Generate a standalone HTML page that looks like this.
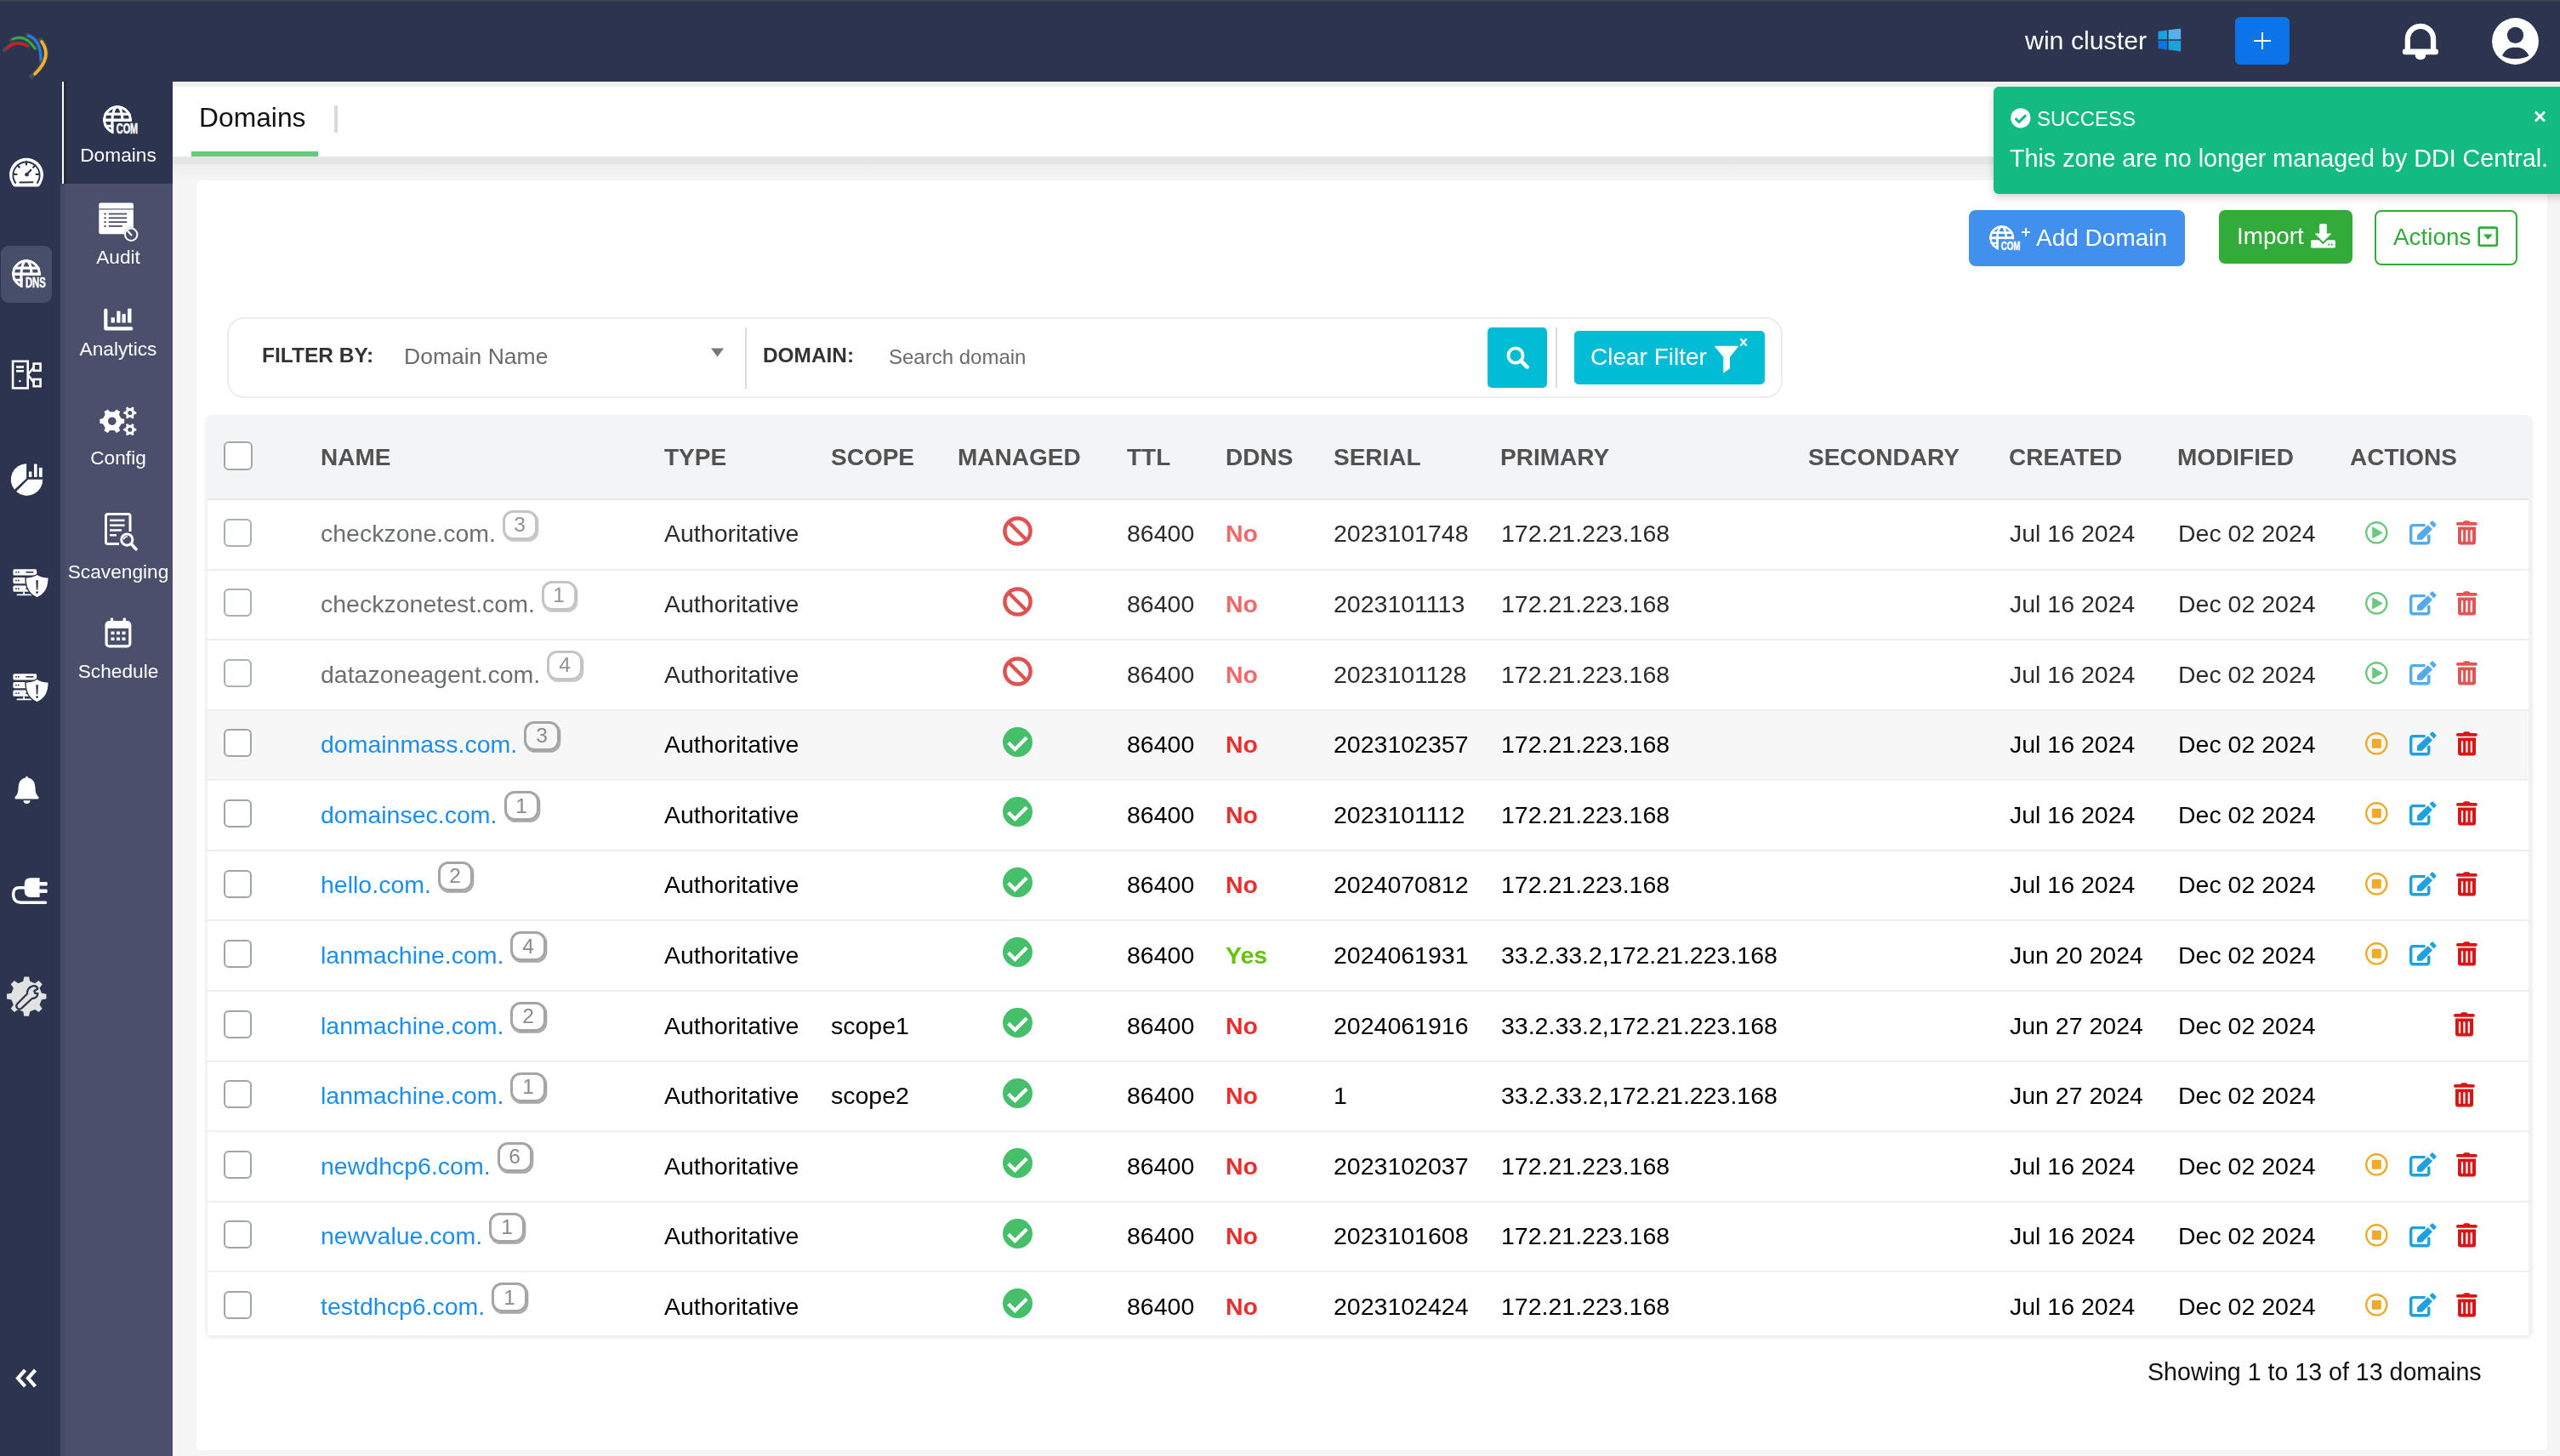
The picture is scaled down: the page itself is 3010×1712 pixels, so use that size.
<!DOCTYPE html>
<html><head><meta charset="utf-8"><style>
html,body{margin:0;padding:0;width:3010px;height:1712px;overflow:hidden;background:#f5f5f5}
body{position:relative;font-family:"Liberation Sans", sans-serif}
.a{position:absolute}
.t{position:absolute;white-space:nowrap;will-change:transform}
svg{overflow:visible}
</style></head><body>
<div class="a" style="left:0.00px;top:0.00px;width:3010.00px;height:1712.00px;background:#f5f5f5"></div>
<div class="a" style="left:0.00px;top:0.00px;width:3010.00px;height:96.00px;background:#2d3450"></div>
<div class="a" style="left:0.00px;top:0.00px;width:3010.00px;height:2.00px;background:#3d4249"></div>
<div class="a" style="left:0.00px;top:96.00px;width:71.00px;height:1616.00px;background:#2d3450"></div>
<div class="a" style="left:71.00px;top:96.00px;width:132.00px;height:1616.00px;background:#4a506b"></div>
<div class="a" style="left:71.00px;top:96.00px;width:6.00px;height:1616.00px;background:#454b66"></div>
<div class="a" style="left:71.00px;top:96.00px;width:132.00px;height:120.00px;background:#2d3450"></div>
<div class="a" style="left:73.00px;top:96.00px;width:2.40px;height:120.00px;background:#ffffff"></div>
<div class="a" style="left:75.40px;top:96.00px;width:2.60px;height:120.00px;background:#292c36"></div>
<div class="a" style="left:203.00px;top:96.00px;width:2807.00px;height:6.00px;background:#f1f1f1"></div>
<div class="a" style="left:203.00px;top:102.00px;width:2807.00px;height:82.00px;background:#ffffff"></div>
<div class="a" style="left:203.00px;top:184.00px;width:2807.00px;height:9.00px;background:#e4e6e5"></div>
<div class="a" style="left:203.00px;top:193.00px;width:2807.00px;height:19.00px;background:linear-gradient(#eeeeee,#f5f5f5)"></div>
<div class="a" style="left:225.00px;top:178.00px;width:149.00px;height:6.00px;background:#68c97d"></div>
<div class="t" style="left:234.30px;top:123.07px;font-size:31.8px;line-height:31.8px;color:#111;font-weight:400;">Domains</div>
<div class="a" style="left:393.00px;top:124.00px;width:4.00px;height:32.00px;background:#d9d9d9"></div>
<div class="a" style="left:231.00px;top:212.00px;width:2764.00px;height:1493.00px;background:#ffffff;border-radius:5px"></div>
<div class="a" style="left:2315.00px;top:247.00px;width:254.00px;height:66.00px;background:#4290ed;border-radius:8px"></div>
<div class="t" style="left:2394.00px;top:266.29px;font-size:28px;line-height:28px;color:#fff;font-weight:400;">Add Domain</div>
<div class="a" style="left:2609.00px;top:247.00px;width:157.00px;height:63.00px;background:#33ab3a;border-radius:7px"></div>
<div class="t" style="left:2630.00px;top:264.46px;font-size:27.8px;line-height:27.8px;color:#fff;font-weight:400;">Import</div>
<div class="a" style="left:2792.00px;top:247.00px;width:168.00px;height:65.00px;border:2px solid #33ab3a;border-radius:8px;box-sizing:border-box"></div>
<div class="t" style="left:2814.00px;top:265.38px;font-size:27.9px;line-height:27.9px;color:#33ab3a;font-weight:400;">Actions</div>
<div class="a" style="left:267.00px;top:373.00px;width:1829.00px;height:95.00px;border:2px solid #ececec;border-radius:20px;box-sizing:border-box"></div>
<div class="t" style="left:308.00px;top:406.26px;font-size:24.5px;line-height:24.5px;color:#333;font-weight:700;">FILTER BY:</div>
<div class="t" style="left:475.00px;top:405.56px;font-size:26.5px;line-height:26.5px;color:#6b6b6b;font-weight:400;">Domain Name</div>
<div class="a" style="left:876.00px;top:385.00px;width:2.00px;height:72.00px;background:#dcdcdc"></div>
<div class="t" style="left:897.00px;top:406.34px;font-size:24.4px;line-height:24.4px;color:#333;font-weight:700;">DOMAIN:</div>
<div class="t" style="left:1045.00px;top:407.68px;font-size:24px;line-height:24px;color:#6b6b6b;font-weight:400;">Search domain</div>
<div class="a" style="left:1749.00px;top:385.00px;width:70.00px;height:71.00px;background:#00bcd4;border-radius:5px"></div>
<div class="a" style="left:1829.00px;top:385.00px;width:2.00px;height:71.00px;background:#dcdcdc"></div>
<div class="a" style="left:1851.00px;top:389.00px;width:224.00px;height:63.00px;background:#00bcd4;border-radius:5px"></div>
<div class="t" style="left:1870.00px;top:406.29px;font-size:28px;line-height:28px;color:#fff;font-weight:400;">Clear Filter</div>
<div class="a" style="left:241.50px;top:488.00px;width:2735.50px;height:1083.00px;background:#f1f1f1;border-radius:8px;box-shadow:0 2px 4px rgba(0,0,0,0.09)"></div>
<div class="a" style="left:241.50px;top:488.00px;width:2735.50px;height:99.00px;background:#f3f4f6;border-radius:8px 8px 0 0"></div>
<div class="a" style="left:244.00px;top:586.00px;width:2729.00px;height:2.00px;background:#e6e6e6"></div>
<div class="a" style="left:263.00px;top:519.00px;width:34.00px;height:34.00px;border:2px solid #a2a7a5;border-radius:6px;box-sizing:border-box;background:#fff"></div>
<div class="t" style="left:377.30px;top:523.79px;font-size:28px;line-height:28px;color:#525252;font-weight:700;">NAME</div>
<div class="t" style="left:781.30px;top:523.79px;font-size:28px;line-height:28px;color:#525252;font-weight:700;">TYPE</div>
<div class="t" style="left:977.30px;top:523.79px;font-size:28px;line-height:28px;color:#525252;font-weight:700;">SCOPE</div>
<div class="t" style="left:1126.30px;top:523.79px;font-size:28px;line-height:28px;color:#525252;font-weight:700;">MANAGED</div>
<div class="t" style="left:1325.30px;top:523.79px;font-size:28px;line-height:28px;color:#525252;font-weight:700;">TTL</div>
<div class="t" style="left:1441.30px;top:523.79px;font-size:28px;line-height:28px;color:#525252;font-weight:700;">DDNS</div>
<div class="t" style="left:1568.30px;top:523.79px;font-size:28px;line-height:28px;color:#525252;font-weight:700;">SERIAL</div>
<div class="t" style="left:1764.30px;top:523.79px;font-size:28px;line-height:28px;color:#525252;font-weight:700;">PRIMARY</div>
<div class="t" style="left:2126.30px;top:523.79px;font-size:28px;line-height:28px;color:#525252;font-weight:700;">SECONDARY</div>
<div class="t" style="left:2362.30px;top:523.79px;font-size:28px;line-height:28px;color:#525252;font-weight:700;">CREATED</div>
<div class="t" style="left:2560.30px;top:523.79px;font-size:28px;line-height:28px;color:#525252;font-weight:700;">MODIFIED</div>
<div class="t" style="left:2763.30px;top:523.79px;font-size:28px;line-height:28px;color:#525252;font-weight:700;">ACTIONS</div>
<div class="a" style="left:244px;top:588px;width:2729px;height:982px;overflow:hidden">
<div class="a" style="left:0;top:0.00px;width:2729px;height:82.58px;background:#fff">
<div class="a" style="left:19px;top:21.7px;width:33px;height:33px;border:2.1px solid #a9b3ae;border-radius:6px;box-sizing:border-box;background:#fff"></div>
<div class="t" style="left:133.20px;top:25.47px;font-size:28.5px;line-height:28.5px;color:#6c6f70;font-weight:400">checkzone.com.</div>
<div class="a" style="left:346.93px;top:12px;width:41.5px;height:35px;border:3.2px solid #c4c4c2;border-radius:12px;box-sizing:border-box;box-shadow:1px 1.5px 0 0.3px #c4c4c2"></div>
<div class="t" style="left:346.43px;width:42px;text-align:center;top:15.20px;font-size:24.5px;line-height:28px;color:#8e9493">3</div>
<div class="t" style="left:537.20px;top:25.47px;font-size:28.5px;line-height:28.5px;color:#2b2b2b;font-weight:400">Authoritative</div>
<svg class="a" style="left:935.00px;top:19.00px" width="35" height="35" viewBox="0 0 35 35"><circle cx="17.5" cy="17.5" r="15.1" fill="none" stroke="#e05252" stroke-width="4.5"/><line x1="7" y1="7" x2="28" y2="28" stroke="#e05252" stroke-width="4.5"/></svg>
<div class="t" style="left:1081.20px;top:25.47px;font-size:28.5px;line-height:28.5px;color:#2b2b2b;font-weight:400">86400</div>
<div class="t" style="left:1197.20px;top:25.47px;font-size:28.5px;line-height:28.5px;color:#ef6a6a;font-weight:700">No</div>
<div class="t" style="left:1324.20px;top:25.47px;font-size:28.5px;line-height:28.5px;color:#2b2b2b;font-weight:400">2023101748</div>
<div class="t" style="left:1521.20px;top:25.47px;font-size:28.5px;line-height:28.5px;color:#2b2b2b;font-weight:400">172.21.223.168</div>
<div class="t" style="left:2119.20px;top:25.47px;font-size:28.5px;line-height:28.5px;color:#2b2b2b;font-weight:400">Jul 16 2024</div>
<div class="t" style="left:2317.20px;top:25.47px;font-size:28.5px;line-height:28.5px;color:#2b2b2b;font-weight:400">Dec 02 2024</div>
<svg class="a" style="left:2536.70px;top:25.00px" width="27" height="27" viewBox="0 0 27 27"><circle cx="13.3" cy="13.3" r="12.1" fill="none" stroke="#6cc77f" stroke-width="2.4"/><path d="M8.2,7 L8.2,20 Q8.2,20.6 8.8,20.3 L20.2,13.8 Q20.6,13.4 20.2,13 L8.8,6.6 Q8.2,6.4 8.2,7 Z" fill="#6cc77f"/></svg>
<svg class="a" style="left:2589.00px;top:24.00px" width="33" height="30" viewBox="0 0 33 30"><path d="M18.6,5.6 H4.4 Q1.7,5.6 1.7,8.3 V24.1 Q1.7,26.8 4.4,26.8 H20.1 Q22.8,26.8 22.8,24.1 V16.75" fill="none" stroke="#55aaea" stroke-width="3.4"/><path d="M8.9,22.7 L9.2,17 L21.7,5.2 L27,10.3 L14.8,22.7 Z" fill="#55aaea"/><path d="M23.6,3.3 L26.2,0.7 Q27,0 27.8,0.7 L31.3,4.2 Q32,5 31.3,5.8 L28.6,8.6 Z" fill="#55aaea"/></svg>
<svg class="a" style="left:2644.00px;top:24.00px" width="25" height="29" viewBox="0 0 25 29"><rect x="0" y="2" width="24.8" height="3.8" rx="1.9" fill="#e05555"/><path d="M7.7,2.6 Q8.5,0.2 10.5,0.2 H14 Q16,0.2 16.6,2.6 Z" fill="#e05555"/><path d="M2,7.4 H23 V25.6 Q23,28.6 20,28.6 H5 Q2,28.6 2,25.6 Z" fill="#e05555"/><rect x="5.9" y="11" width="2.2" height="14" rx="1.1" fill="#fff"/><rect x="11.3" y="11" width="2.2" height="14" rx="1.1" fill="#fff"/><rect x="16.7" y="11" width="2.2" height="14" rx="1.1" fill="#fff"/></svg>
</div>
<div class="a" style="left:0;top:80.58px;width:2729px;height:2px;background:#efefef"></div>
<div class="a" style="left:0;top:82.58px;width:2729px;height:82.58px;background:#fff">
<div class="a" style="left:19px;top:21.7px;width:33px;height:33px;border:2.1px solid #a9b3ae;border-radius:6px;box-sizing:border-box;background:#fff"></div>
<div class="t" style="left:133.20px;top:25.47px;font-size:28.5px;line-height:28.5px;color:#6c6f70;font-weight:400">checkzonetest.com.</div>
<div class="a" style="left:392.87px;top:12px;width:41.5px;height:35px;border:3.2px solid #c4c4c2;border-radius:12px;box-sizing:border-box;box-shadow:1px 1.5px 0 0.3px #c4c4c2"></div>
<div class="t" style="left:392.37px;width:42px;text-align:center;top:15.20px;font-size:24.5px;line-height:28px;color:#8e9493">1</div>
<div class="t" style="left:537.20px;top:25.47px;font-size:28.5px;line-height:28.5px;color:#2b2b2b;font-weight:400">Authoritative</div>
<svg class="a" style="left:935.00px;top:19.00px" width="35" height="35" viewBox="0 0 35 35"><circle cx="17.5" cy="17.5" r="15.1" fill="none" stroke="#e05252" stroke-width="4.5"/><line x1="7" y1="7" x2="28" y2="28" stroke="#e05252" stroke-width="4.5"/></svg>
<div class="t" style="left:1081.20px;top:25.47px;font-size:28.5px;line-height:28.5px;color:#2b2b2b;font-weight:400">86400</div>
<div class="t" style="left:1197.20px;top:25.47px;font-size:28.5px;line-height:28.5px;color:#ef6a6a;font-weight:700">No</div>
<div class="t" style="left:1324.20px;top:25.47px;font-size:28.5px;line-height:28.5px;color:#2b2b2b;font-weight:400">2023101113</div>
<div class="t" style="left:1521.20px;top:25.47px;font-size:28.5px;line-height:28.5px;color:#2b2b2b;font-weight:400">172.21.223.168</div>
<div class="t" style="left:2119.20px;top:25.47px;font-size:28.5px;line-height:28.5px;color:#2b2b2b;font-weight:400">Jul 16 2024</div>
<div class="t" style="left:2317.20px;top:25.47px;font-size:28.5px;line-height:28.5px;color:#2b2b2b;font-weight:400">Dec 02 2024</div>
<svg class="a" style="left:2536.70px;top:25.00px" width="27" height="27" viewBox="0 0 27 27"><circle cx="13.3" cy="13.3" r="12.1" fill="none" stroke="#6cc77f" stroke-width="2.4"/><path d="M8.2,7 L8.2,20 Q8.2,20.6 8.8,20.3 L20.2,13.8 Q20.6,13.4 20.2,13 L8.8,6.6 Q8.2,6.4 8.2,7 Z" fill="#6cc77f"/></svg>
<svg class="a" style="left:2589.00px;top:24.00px" width="33" height="30" viewBox="0 0 33 30"><path d="M18.6,5.6 H4.4 Q1.7,5.6 1.7,8.3 V24.1 Q1.7,26.8 4.4,26.8 H20.1 Q22.8,26.8 22.8,24.1 V16.75" fill="none" stroke="#55aaea" stroke-width="3.4"/><path d="M8.9,22.7 L9.2,17 L21.7,5.2 L27,10.3 L14.8,22.7 Z" fill="#55aaea"/><path d="M23.6,3.3 L26.2,0.7 Q27,0 27.8,0.7 L31.3,4.2 Q32,5 31.3,5.8 L28.6,8.6 Z" fill="#55aaea"/></svg>
<svg class="a" style="left:2644.00px;top:24.00px" width="25" height="29" viewBox="0 0 25 29"><rect x="0" y="2" width="24.8" height="3.8" rx="1.9" fill="#e05555"/><path d="M7.7,2.6 Q8.5,0.2 10.5,0.2 H14 Q16,0.2 16.6,2.6 Z" fill="#e05555"/><path d="M2,7.4 H23 V25.6 Q23,28.6 20,28.6 H5 Q2,28.6 2,25.6 Z" fill="#e05555"/><rect x="5.9" y="11" width="2.2" height="14" rx="1.1" fill="#fff"/><rect x="11.3" y="11" width="2.2" height="14" rx="1.1" fill="#fff"/><rect x="16.7" y="11" width="2.2" height="14" rx="1.1" fill="#fff"/></svg>
</div>
<div class="a" style="left:0;top:163.16px;width:2729px;height:2px;background:#efefef"></div>
<div class="a" style="left:0;top:165.16px;width:2729px;height:82.58px;background:#fff">
<div class="a" style="left:19px;top:21.7px;width:33px;height:33px;border:2.1px solid #a9b3ae;border-radius:6px;box-sizing:border-box;background:#fff"></div>
<div class="t" style="left:133.20px;top:25.47px;font-size:28.5px;line-height:28.5px;color:#6c6f70;font-weight:400">datazoneagent.com.</div>
<div class="a" style="left:399.27px;top:12px;width:41.5px;height:35px;border:3.2px solid #c4c4c2;border-radius:12px;box-sizing:border-box;box-shadow:1px 1.5px 0 0.3px #c4c4c2"></div>
<div class="t" style="left:398.77px;width:42px;text-align:center;top:15.20px;font-size:24.5px;line-height:28px;color:#8e9493">4</div>
<div class="t" style="left:537.20px;top:25.47px;font-size:28.5px;line-height:28.5px;color:#2b2b2b;font-weight:400">Authoritative</div>
<svg class="a" style="left:935.00px;top:19.00px" width="35" height="35" viewBox="0 0 35 35"><circle cx="17.5" cy="17.5" r="15.1" fill="none" stroke="#e05252" stroke-width="4.5"/><line x1="7" y1="7" x2="28" y2="28" stroke="#e05252" stroke-width="4.5"/></svg>
<div class="t" style="left:1081.20px;top:25.47px;font-size:28.5px;line-height:28.5px;color:#2b2b2b;font-weight:400">86400</div>
<div class="t" style="left:1197.20px;top:25.47px;font-size:28.5px;line-height:28.5px;color:#ef6a6a;font-weight:700">No</div>
<div class="t" style="left:1324.20px;top:25.47px;font-size:28.5px;line-height:28.5px;color:#2b2b2b;font-weight:400">2023101128</div>
<div class="t" style="left:1521.20px;top:25.47px;font-size:28.5px;line-height:28.5px;color:#2b2b2b;font-weight:400">172.21.223.168</div>
<div class="t" style="left:2119.20px;top:25.47px;font-size:28.5px;line-height:28.5px;color:#2b2b2b;font-weight:400">Jul 16 2024</div>
<div class="t" style="left:2317.20px;top:25.47px;font-size:28.5px;line-height:28.5px;color:#2b2b2b;font-weight:400">Dec 02 2024</div>
<svg class="a" style="left:2536.70px;top:25.00px" width="27" height="27" viewBox="0 0 27 27"><circle cx="13.3" cy="13.3" r="12.1" fill="none" stroke="#6cc77f" stroke-width="2.4"/><path d="M8.2,7 L8.2,20 Q8.2,20.6 8.8,20.3 L20.2,13.8 Q20.6,13.4 20.2,13 L8.8,6.6 Q8.2,6.4 8.2,7 Z" fill="#6cc77f"/></svg>
<svg class="a" style="left:2589.00px;top:24.00px" width="33" height="30" viewBox="0 0 33 30"><path d="M18.6,5.6 H4.4 Q1.7,5.6 1.7,8.3 V24.1 Q1.7,26.8 4.4,26.8 H20.1 Q22.8,26.8 22.8,24.1 V16.75" fill="none" stroke="#55aaea" stroke-width="3.4"/><path d="M8.9,22.7 L9.2,17 L21.7,5.2 L27,10.3 L14.8,22.7 Z" fill="#55aaea"/><path d="M23.6,3.3 L26.2,0.7 Q27,0 27.8,0.7 L31.3,4.2 Q32,5 31.3,5.8 L28.6,8.6 Z" fill="#55aaea"/></svg>
<svg class="a" style="left:2644.00px;top:24.00px" width="25" height="29" viewBox="0 0 25 29"><rect x="0" y="2" width="24.8" height="3.8" rx="1.9" fill="#e05555"/><path d="M7.7,2.6 Q8.5,0.2 10.5,0.2 H14 Q16,0.2 16.6,2.6 Z" fill="#e05555"/><path d="M2,7.4 H23 V25.6 Q23,28.6 20,28.6 H5 Q2,28.6 2,25.6 Z" fill="#e05555"/><rect x="5.9" y="11" width="2.2" height="14" rx="1.1" fill="#fff"/><rect x="11.3" y="11" width="2.2" height="14" rx="1.1" fill="#fff"/><rect x="16.7" y="11" width="2.2" height="14" rx="1.1" fill="#fff"/></svg>
</div>
<div class="a" style="left:0;top:245.74px;width:2729px;height:2px;background:#efefef"></div>
<div class="a" style="left:0;top:247.74px;width:2729px;height:82.58px;background:#f7f7f7">
<div class="a" style="left:19px;top:21.7px;width:33px;height:33px;border:2.1px solid #a0a6a3;border-radius:6px;box-sizing:border-box;background:#fff"></div>
<div class="t" style="left:133.20px;top:25.47px;font-size:28.5px;line-height:28.5px;color:#1b8ef0;font-weight:400">domainmass.com.</div>
<div class="a" style="left:372.24px;top:12px;width:41.5px;height:35px;border:3.2px solid #a3a6a5;border-radius:12px;box-sizing:border-box;box-shadow:1px 1.5px 0 0.3px #a3a6a5"></div>
<div class="t" style="left:371.74px;width:42px;text-align:center;top:15.20px;font-size:24.5px;line-height:28px;color:#8a8a8a">3</div>
<div class="t" style="left:537.20px;top:25.47px;font-size:28.5px;line-height:28.5px;color:#000;font-weight:400">Authoritative</div>
<svg class="a" style="left:935.00px;top:19.00px" width="35" height="35" viewBox="0 0 35 35"><circle cx="17.5" cy="17.5" r="17.5" fill="#45bf69"/><path d="M6.6,18.2 L14.4,26 L28.2,12.2" fill="none" stroke="#f7f7f7" stroke-width="4.3"/></svg>
<div class="t" style="left:1081.20px;top:25.47px;font-size:28.5px;line-height:28.5px;color:#000;font-weight:400">86400</div>
<div class="t" style="left:1197.20px;top:25.47px;font-size:28.5px;line-height:28.5px;color:#e8302f;font-weight:700">No</div>
<div class="t" style="left:1324.20px;top:25.47px;font-size:28.5px;line-height:28.5px;color:#000;font-weight:400">2023102357</div>
<div class="t" style="left:1521.20px;top:25.47px;font-size:28.5px;line-height:28.5px;color:#000;font-weight:400">172.21.223.168</div>
<div class="t" style="left:2119.20px;top:25.47px;font-size:28.5px;line-height:28.5px;color:#000;font-weight:400">Jul 16 2024</div>
<div class="t" style="left:2317.20px;top:25.47px;font-size:28.5px;line-height:28.5px;color:#000;font-weight:400">Dec 02 2024</div>
<svg class="a" style="left:2536.70px;top:25.00px" width="27" height="27" viewBox="0 0 27 27"><circle cx="13.3" cy="13.3" r="12.1" fill="none" stroke="#eeaa2a" stroke-width="2.4"/><rect x="7.8" y="7.8" width="11" height="11" rx="1.2" fill="#eeaa2a"/></svg>
<svg class="a" style="left:2589.00px;top:24.00px" width="33" height="30" viewBox="0 0 33 30"><path d="M18.6,5.6 H4.4 Q1.7,5.6 1.7,8.3 V24.1 Q1.7,26.8 4.4,26.8 H20.1 Q22.8,26.8 22.8,24.1 V16.75" fill="none" stroke="#1ea1dc" stroke-width="3.4"/><path d="M8.9,22.7 L9.2,17 L21.7,5.2 L27,10.3 L14.8,22.7 Z" fill="#1ea1dc"/><path d="M23.6,3.3 L26.2,0.7 Q27,0 27.8,0.7 L31.3,4.2 Q32,5 31.3,5.8 L28.6,8.6 Z" fill="#1ea1dc"/></svg>
<svg class="a" style="left:2644.00px;top:24.00px" width="25" height="29" viewBox="0 0 25 29"><rect x="0" y="2" width="24.8" height="3.8" rx="1.9" fill="#d91515"/><path d="M7.7,2.6 Q8.5,0.2 10.5,0.2 H14 Q16,0.2 16.6,2.6 Z" fill="#d91515"/><path d="M2,7.4 H23 V25.6 Q23,28.6 20,28.6 H5 Q2,28.6 2,25.6 Z" fill="#d91515"/><rect x="5.9" y="11" width="2.2" height="14" rx="1.1" fill="#f7f7f7"/><rect x="11.3" y="11" width="2.2" height="14" rx="1.1" fill="#f7f7f7"/><rect x="16.7" y="11" width="2.2" height="14" rx="1.1" fill="#f7f7f7"/></svg>
</div>
<div class="a" style="left:0;top:328.32px;width:2729px;height:2px;background:#efefef"></div>
<div class="a" style="left:0;top:330.32px;width:2729px;height:82.58px;background:#fff">
<div class="a" style="left:19px;top:21.7px;width:33px;height:33px;border:2.1px solid #a0a6a3;border-radius:6px;box-sizing:border-box;background:#fff"></div>
<div class="t" style="left:133.20px;top:25.47px;font-size:28.5px;line-height:28.5px;color:#1b8ef0;font-weight:400">domainsec.com.</div>
<div class="a" style="left:348.50px;top:12px;width:41.5px;height:35px;border:3.2px solid #a3a6a5;border-radius:12px;box-sizing:border-box;box-shadow:1px 1.5px 0 0.3px #a3a6a5"></div>
<div class="t" style="left:348.00px;width:42px;text-align:center;top:15.20px;font-size:24.5px;line-height:28px;color:#8a8a8a">1</div>
<div class="t" style="left:537.20px;top:25.47px;font-size:28.5px;line-height:28.5px;color:#000;font-weight:400">Authoritative</div>
<svg class="a" style="left:935.00px;top:19.00px" width="35" height="35" viewBox="0 0 35 35"><circle cx="17.5" cy="17.5" r="17.5" fill="#45bf69"/><path d="M6.6,18.2 L14.4,26 L28.2,12.2" fill="none" stroke="#fff" stroke-width="4.3"/></svg>
<div class="t" style="left:1081.20px;top:25.47px;font-size:28.5px;line-height:28.5px;color:#000;font-weight:400">86400</div>
<div class="t" style="left:1197.20px;top:25.47px;font-size:28.5px;line-height:28.5px;color:#e8302f;font-weight:700">No</div>
<div class="t" style="left:1324.20px;top:25.47px;font-size:28.5px;line-height:28.5px;color:#000;font-weight:400">2023101112</div>
<div class="t" style="left:1521.20px;top:25.47px;font-size:28.5px;line-height:28.5px;color:#000;font-weight:400">172.21.223.168</div>
<div class="t" style="left:2119.20px;top:25.47px;font-size:28.5px;line-height:28.5px;color:#000;font-weight:400">Jul 16 2024</div>
<div class="t" style="left:2317.20px;top:25.47px;font-size:28.5px;line-height:28.5px;color:#000;font-weight:400">Dec 02 2024</div>
<svg class="a" style="left:2536.70px;top:25.00px" width="27" height="27" viewBox="0 0 27 27"><circle cx="13.3" cy="13.3" r="12.1" fill="none" stroke="#eeaa2a" stroke-width="2.4"/><rect x="7.8" y="7.8" width="11" height="11" rx="1.2" fill="#eeaa2a"/></svg>
<svg class="a" style="left:2589.00px;top:24.00px" width="33" height="30" viewBox="0 0 33 30"><path d="M18.6,5.6 H4.4 Q1.7,5.6 1.7,8.3 V24.1 Q1.7,26.8 4.4,26.8 H20.1 Q22.8,26.8 22.8,24.1 V16.75" fill="none" stroke="#1ea1dc" stroke-width="3.4"/><path d="M8.9,22.7 L9.2,17 L21.7,5.2 L27,10.3 L14.8,22.7 Z" fill="#1ea1dc"/><path d="M23.6,3.3 L26.2,0.7 Q27,0 27.8,0.7 L31.3,4.2 Q32,5 31.3,5.8 L28.6,8.6 Z" fill="#1ea1dc"/></svg>
<svg class="a" style="left:2644.00px;top:24.00px" width="25" height="29" viewBox="0 0 25 29"><rect x="0" y="2" width="24.8" height="3.8" rx="1.9" fill="#d91515"/><path d="M7.7,2.6 Q8.5,0.2 10.5,0.2 H14 Q16,0.2 16.6,2.6 Z" fill="#d91515"/><path d="M2,7.4 H23 V25.6 Q23,28.6 20,28.6 H5 Q2,28.6 2,25.6 Z" fill="#d91515"/><rect x="5.9" y="11" width="2.2" height="14" rx="1.1" fill="#fff"/><rect x="11.3" y="11" width="2.2" height="14" rx="1.1" fill="#fff"/><rect x="16.7" y="11" width="2.2" height="14" rx="1.1" fill="#fff"/></svg>
</div>
<div class="a" style="left:0;top:410.90px;width:2729px;height:2px;background:#efefef"></div>
<div class="a" style="left:0;top:412.90px;width:2729px;height:82.58px;background:#fff">
<div class="a" style="left:19px;top:21.7px;width:33px;height:33px;border:2.1px solid #a0a6a3;border-radius:6px;box-sizing:border-box;background:#fff"></div>
<div class="t" style="left:133.20px;top:25.47px;font-size:28.5px;line-height:28.5px;color:#1b8ef0;font-weight:400">hello.com.</div>
<div class="a" style="left:270.89px;top:12px;width:41.5px;height:35px;border:3.2px solid #a3a6a5;border-radius:12px;box-sizing:border-box;box-shadow:1px 1.5px 0 0.3px #a3a6a5"></div>
<div class="t" style="left:270.39px;width:42px;text-align:center;top:15.20px;font-size:24.5px;line-height:28px;color:#8a8a8a">2</div>
<div class="t" style="left:537.20px;top:25.47px;font-size:28.5px;line-height:28.5px;color:#000;font-weight:400">Authoritative</div>
<svg class="a" style="left:935.00px;top:19.00px" width="35" height="35" viewBox="0 0 35 35"><circle cx="17.5" cy="17.5" r="17.5" fill="#45bf69"/><path d="M6.6,18.2 L14.4,26 L28.2,12.2" fill="none" stroke="#fff" stroke-width="4.3"/></svg>
<div class="t" style="left:1081.20px;top:25.47px;font-size:28.5px;line-height:28.5px;color:#000;font-weight:400">86400</div>
<div class="t" style="left:1197.20px;top:25.47px;font-size:28.5px;line-height:28.5px;color:#e8302f;font-weight:700">No</div>
<div class="t" style="left:1324.20px;top:25.47px;font-size:28.5px;line-height:28.5px;color:#000;font-weight:400">2024070812</div>
<div class="t" style="left:1521.20px;top:25.47px;font-size:28.5px;line-height:28.5px;color:#000;font-weight:400">172.21.223.168</div>
<div class="t" style="left:2119.20px;top:25.47px;font-size:28.5px;line-height:28.5px;color:#000;font-weight:400">Jul 16 2024</div>
<div class="t" style="left:2317.20px;top:25.47px;font-size:28.5px;line-height:28.5px;color:#000;font-weight:400">Dec 02 2024</div>
<svg class="a" style="left:2536.70px;top:25.00px" width="27" height="27" viewBox="0 0 27 27"><circle cx="13.3" cy="13.3" r="12.1" fill="none" stroke="#eeaa2a" stroke-width="2.4"/><rect x="7.8" y="7.8" width="11" height="11" rx="1.2" fill="#eeaa2a"/></svg>
<svg class="a" style="left:2589.00px;top:24.00px" width="33" height="30" viewBox="0 0 33 30"><path d="M18.6,5.6 H4.4 Q1.7,5.6 1.7,8.3 V24.1 Q1.7,26.8 4.4,26.8 H20.1 Q22.8,26.8 22.8,24.1 V16.75" fill="none" stroke="#1ea1dc" stroke-width="3.4"/><path d="M8.9,22.7 L9.2,17 L21.7,5.2 L27,10.3 L14.8,22.7 Z" fill="#1ea1dc"/><path d="M23.6,3.3 L26.2,0.7 Q27,0 27.8,0.7 L31.3,4.2 Q32,5 31.3,5.8 L28.6,8.6 Z" fill="#1ea1dc"/></svg>
<svg class="a" style="left:2644.00px;top:24.00px" width="25" height="29" viewBox="0 0 25 29"><rect x="0" y="2" width="24.8" height="3.8" rx="1.9" fill="#d91515"/><path d="M7.7,2.6 Q8.5,0.2 10.5,0.2 H14 Q16,0.2 16.6,2.6 Z" fill="#d91515"/><path d="M2,7.4 H23 V25.6 Q23,28.6 20,28.6 H5 Q2,28.6 2,25.6 Z" fill="#d91515"/><rect x="5.9" y="11" width="2.2" height="14" rx="1.1" fill="#fff"/><rect x="11.3" y="11" width="2.2" height="14" rx="1.1" fill="#fff"/><rect x="16.7" y="11" width="2.2" height="14" rx="1.1" fill="#fff"/></svg>
</div>
<div class="a" style="left:0;top:493.48px;width:2729px;height:2px;background:#efefef"></div>
<div class="a" style="left:0;top:495.48px;width:2729px;height:82.58px;background:#fff">
<div class="a" style="left:19px;top:21.7px;width:33px;height:33px;border:2.1px solid #a0a6a3;border-radius:6px;box-sizing:border-box;background:#fff"></div>
<div class="t" style="left:133.20px;top:25.47px;font-size:28.5px;line-height:28.5px;color:#1b8ef0;font-weight:400">lanmachine.com.</div>
<div class="a" style="left:356.44px;top:12px;width:41.5px;height:35px;border:3.2px solid #a3a6a5;border-radius:12px;box-sizing:border-box;box-shadow:1px 1.5px 0 0.3px #a3a6a5"></div>
<div class="t" style="left:355.94px;width:42px;text-align:center;top:15.20px;font-size:24.5px;line-height:28px;color:#8a8a8a">4</div>
<div class="t" style="left:537.20px;top:25.47px;font-size:28.5px;line-height:28.5px;color:#000;font-weight:400">Authoritative</div>
<svg class="a" style="left:935.00px;top:19.00px" width="35" height="35" viewBox="0 0 35 35"><circle cx="17.5" cy="17.5" r="17.5" fill="#45bf69"/><path d="M6.6,18.2 L14.4,26 L28.2,12.2" fill="none" stroke="#fff" stroke-width="4.3"/></svg>
<div class="t" style="left:1081.20px;top:25.47px;font-size:28.5px;line-height:28.5px;color:#000;font-weight:400">86400</div>
<div class="t" style="left:1197.20px;top:25.47px;font-size:28.5px;line-height:28.5px;color:#67c20a;font-weight:700">Yes</div>
<div class="t" style="left:1324.20px;top:25.47px;font-size:28.5px;line-height:28.5px;color:#000;font-weight:400">2024061931</div>
<div class="t" style="left:1521.20px;top:25.47px;font-size:28.5px;line-height:28.5px;color:#000;font-weight:400">33.2.33.2,172.21.223.168</div>
<div class="t" style="left:2119.20px;top:25.47px;font-size:28.5px;line-height:28.5px;color:#000;font-weight:400">Jun 20 2024</div>
<div class="t" style="left:2317.20px;top:25.47px;font-size:28.5px;line-height:28.5px;color:#000;font-weight:400">Dec 02 2024</div>
<svg class="a" style="left:2536.70px;top:25.00px" width="27" height="27" viewBox="0 0 27 27"><circle cx="13.3" cy="13.3" r="12.1" fill="none" stroke="#eeaa2a" stroke-width="2.4"/><rect x="7.8" y="7.8" width="11" height="11" rx="1.2" fill="#eeaa2a"/></svg>
<svg class="a" style="left:2589.00px;top:24.00px" width="33" height="30" viewBox="0 0 33 30"><path d="M18.6,5.6 H4.4 Q1.7,5.6 1.7,8.3 V24.1 Q1.7,26.8 4.4,26.8 H20.1 Q22.8,26.8 22.8,24.1 V16.75" fill="none" stroke="#1ea1dc" stroke-width="3.4"/><path d="M8.9,22.7 L9.2,17 L21.7,5.2 L27,10.3 L14.8,22.7 Z" fill="#1ea1dc"/><path d="M23.6,3.3 L26.2,0.7 Q27,0 27.8,0.7 L31.3,4.2 Q32,5 31.3,5.8 L28.6,8.6 Z" fill="#1ea1dc"/></svg>
<svg class="a" style="left:2644.00px;top:24.00px" width="25" height="29" viewBox="0 0 25 29"><rect x="0" y="2" width="24.8" height="3.8" rx="1.9" fill="#d91515"/><path d="M7.7,2.6 Q8.5,0.2 10.5,0.2 H14 Q16,0.2 16.6,2.6 Z" fill="#d91515"/><path d="M2,7.4 H23 V25.6 Q23,28.6 20,28.6 H5 Q2,28.6 2,25.6 Z" fill="#d91515"/><rect x="5.9" y="11" width="2.2" height="14" rx="1.1" fill="#fff"/><rect x="11.3" y="11" width="2.2" height="14" rx="1.1" fill="#fff"/><rect x="16.7" y="11" width="2.2" height="14" rx="1.1" fill="#fff"/></svg>
</div>
<div class="a" style="left:0;top:576.06px;width:2729px;height:2px;background:#efefef"></div>
<div class="a" style="left:0;top:578.06px;width:2729px;height:82.58px;background:#fff">
<div class="a" style="left:19px;top:21.7px;width:33px;height:33px;border:2.1px solid #a0a6a3;border-radius:6px;box-sizing:border-box;background:#fff"></div>
<div class="t" style="left:133.20px;top:25.47px;font-size:28.5px;line-height:28.5px;color:#1b8ef0;font-weight:400">lanmachine.com.</div>
<div class="a" style="left:356.44px;top:12px;width:41.5px;height:35px;border:3.2px solid #a3a6a5;border-radius:12px;box-sizing:border-box;box-shadow:1px 1.5px 0 0.3px #a3a6a5"></div>
<div class="t" style="left:355.94px;width:42px;text-align:center;top:15.20px;font-size:24.5px;line-height:28px;color:#8a8a8a">2</div>
<div class="t" style="left:537.20px;top:25.47px;font-size:28.5px;line-height:28.5px;color:#000;font-weight:400">Authoritative</div>
<div class="t" style="left:733.20px;top:25.47px;font-size:28.5px;line-height:28.5px;color:#000;font-weight:400">scope1</div>
<svg class="a" style="left:935.00px;top:19.00px" width="35" height="35" viewBox="0 0 35 35"><circle cx="17.5" cy="17.5" r="17.5" fill="#45bf69"/><path d="M6.6,18.2 L14.4,26 L28.2,12.2" fill="none" stroke="#fff" stroke-width="4.3"/></svg>
<div class="t" style="left:1081.20px;top:25.47px;font-size:28.5px;line-height:28.5px;color:#000;font-weight:400">86400</div>
<div class="t" style="left:1197.20px;top:25.47px;font-size:28.5px;line-height:28.5px;color:#e8302f;font-weight:700">No</div>
<div class="t" style="left:1324.20px;top:25.47px;font-size:28.5px;line-height:28.5px;color:#000;font-weight:400">2024061916</div>
<div class="t" style="left:1521.20px;top:25.47px;font-size:28.5px;line-height:28.5px;color:#000;font-weight:400">33.2.33.2,172.21.223.168</div>
<div class="t" style="left:2119.20px;top:25.47px;font-size:28.5px;line-height:28.5px;color:#000;font-weight:400">Jun 27 2024</div>
<div class="t" style="left:2317.20px;top:25.47px;font-size:28.5px;line-height:28.5px;color:#000;font-weight:400">Dec 02 2024</div>
<svg class="a" style="left:2641.00px;top:24.00px" width="25" height="29" viewBox="0 0 25 29"><rect x="0" y="2" width="24.8" height="3.8" rx="1.9" fill="#d91515"/><path d="M7.7,2.6 Q8.5,0.2 10.5,0.2 H14 Q16,0.2 16.6,2.6 Z" fill="#d91515"/><path d="M2,7.4 H23 V25.6 Q23,28.6 20,28.6 H5 Q2,28.6 2,25.6 Z" fill="#d91515"/><rect x="5.9" y="11" width="2.2" height="14" rx="1.1" fill="#fff"/><rect x="11.3" y="11" width="2.2" height="14" rx="1.1" fill="#fff"/><rect x="16.7" y="11" width="2.2" height="14" rx="1.1" fill="#fff"/></svg>
</div>
<div class="a" style="left:0;top:658.64px;width:2729px;height:2px;background:#efefef"></div>
<div class="a" style="left:0;top:660.64px;width:2729px;height:82.58px;background:#fff">
<div class="a" style="left:19px;top:21.7px;width:33px;height:33px;border:2.1px solid #a0a6a3;border-radius:6px;box-sizing:border-box;background:#fff"></div>
<div class="t" style="left:133.20px;top:25.47px;font-size:28.5px;line-height:28.5px;color:#1b8ef0;font-weight:400">lanmachine.com.</div>
<div class="a" style="left:356.44px;top:12px;width:41.5px;height:35px;border:3.2px solid #a3a6a5;border-radius:12px;box-sizing:border-box;box-shadow:1px 1.5px 0 0.3px #a3a6a5"></div>
<div class="t" style="left:355.94px;width:42px;text-align:center;top:15.20px;font-size:24.5px;line-height:28px;color:#8a8a8a">1</div>
<div class="t" style="left:537.20px;top:25.47px;font-size:28.5px;line-height:28.5px;color:#000;font-weight:400">Authoritative</div>
<div class="t" style="left:733.20px;top:25.47px;font-size:28.5px;line-height:28.5px;color:#000;font-weight:400">scope2</div>
<svg class="a" style="left:935.00px;top:19.00px" width="35" height="35" viewBox="0 0 35 35"><circle cx="17.5" cy="17.5" r="17.5" fill="#45bf69"/><path d="M6.6,18.2 L14.4,26 L28.2,12.2" fill="none" stroke="#fff" stroke-width="4.3"/></svg>
<div class="t" style="left:1081.20px;top:25.47px;font-size:28.5px;line-height:28.5px;color:#000;font-weight:400">86400</div>
<div class="t" style="left:1197.20px;top:25.47px;font-size:28.5px;line-height:28.5px;color:#e8302f;font-weight:700">No</div>
<div class="t" style="left:1324.20px;top:25.47px;font-size:28.5px;line-height:28.5px;color:#000;font-weight:400">1</div>
<div class="t" style="left:1521.20px;top:25.47px;font-size:28.5px;line-height:28.5px;color:#000;font-weight:400">33.2.33.2,172.21.223.168</div>
<div class="t" style="left:2119.20px;top:25.47px;font-size:28.5px;line-height:28.5px;color:#000;font-weight:400">Jun 27 2024</div>
<div class="t" style="left:2317.20px;top:25.47px;font-size:28.5px;line-height:28.5px;color:#000;font-weight:400">Dec 02 2024</div>
<svg class="a" style="left:2641.00px;top:24.00px" width="25" height="29" viewBox="0 0 25 29"><rect x="0" y="2" width="24.8" height="3.8" rx="1.9" fill="#d91515"/><path d="M7.7,2.6 Q8.5,0.2 10.5,0.2 H14 Q16,0.2 16.6,2.6 Z" fill="#d91515"/><path d="M2,7.4 H23 V25.6 Q23,28.6 20,28.6 H5 Q2,28.6 2,25.6 Z" fill="#d91515"/><rect x="5.9" y="11" width="2.2" height="14" rx="1.1" fill="#fff"/><rect x="11.3" y="11" width="2.2" height="14" rx="1.1" fill="#fff"/><rect x="16.7" y="11" width="2.2" height="14" rx="1.1" fill="#fff"/></svg>
</div>
<div class="a" style="left:0;top:741.22px;width:2729px;height:2px;background:#efefef"></div>
<div class="a" style="left:0;top:743.22px;width:2729px;height:82.58px;background:#fff">
<div class="a" style="left:19px;top:21.7px;width:33px;height:33px;border:2.1px solid #a0a6a3;border-radius:6px;box-sizing:border-box;background:#fff"></div>
<div class="t" style="left:133.20px;top:25.47px;font-size:28.5px;line-height:28.5px;color:#1b8ef0;font-weight:400">newdhcp6.com.</div>
<div class="a" style="left:340.61px;top:12px;width:41.5px;height:35px;border:3.2px solid #a3a6a5;border-radius:12px;box-sizing:border-box;box-shadow:1px 1.5px 0 0.3px #a3a6a5"></div>
<div class="t" style="left:340.11px;width:42px;text-align:center;top:15.20px;font-size:24.5px;line-height:28px;color:#8a8a8a">6</div>
<div class="t" style="left:537.20px;top:25.47px;font-size:28.5px;line-height:28.5px;color:#000;font-weight:400">Authoritative</div>
<svg class="a" style="left:935.00px;top:19.00px" width="35" height="35" viewBox="0 0 35 35"><circle cx="17.5" cy="17.5" r="17.5" fill="#45bf69"/><path d="M6.6,18.2 L14.4,26 L28.2,12.2" fill="none" stroke="#fff" stroke-width="4.3"/></svg>
<div class="t" style="left:1081.20px;top:25.47px;font-size:28.5px;line-height:28.5px;color:#000;font-weight:400">86400</div>
<div class="t" style="left:1197.20px;top:25.47px;font-size:28.5px;line-height:28.5px;color:#e8302f;font-weight:700">No</div>
<div class="t" style="left:1324.20px;top:25.47px;font-size:28.5px;line-height:28.5px;color:#000;font-weight:400">2023102037</div>
<div class="t" style="left:1521.20px;top:25.47px;font-size:28.5px;line-height:28.5px;color:#000;font-weight:400">172.21.223.168</div>
<div class="t" style="left:2119.20px;top:25.47px;font-size:28.5px;line-height:28.5px;color:#000;font-weight:400">Jul 16 2024</div>
<div class="t" style="left:2317.20px;top:25.47px;font-size:28.5px;line-height:28.5px;color:#000;font-weight:400">Dec 02 2024</div>
<svg class="a" style="left:2536.70px;top:25.00px" width="27" height="27" viewBox="0 0 27 27"><circle cx="13.3" cy="13.3" r="12.1" fill="none" stroke="#eeaa2a" stroke-width="2.4"/><rect x="7.8" y="7.8" width="11" height="11" rx="1.2" fill="#eeaa2a"/></svg>
<svg class="a" style="left:2589.00px;top:24.00px" width="33" height="30" viewBox="0 0 33 30"><path d="M18.6,5.6 H4.4 Q1.7,5.6 1.7,8.3 V24.1 Q1.7,26.8 4.4,26.8 H20.1 Q22.8,26.8 22.8,24.1 V16.75" fill="none" stroke="#1ea1dc" stroke-width="3.4"/><path d="M8.9,22.7 L9.2,17 L21.7,5.2 L27,10.3 L14.8,22.7 Z" fill="#1ea1dc"/><path d="M23.6,3.3 L26.2,0.7 Q27,0 27.8,0.7 L31.3,4.2 Q32,5 31.3,5.8 L28.6,8.6 Z" fill="#1ea1dc"/></svg>
<svg class="a" style="left:2644.00px;top:24.00px" width="25" height="29" viewBox="0 0 25 29"><rect x="0" y="2" width="24.8" height="3.8" rx="1.9" fill="#d91515"/><path d="M7.7,2.6 Q8.5,0.2 10.5,0.2 H14 Q16,0.2 16.6,2.6 Z" fill="#d91515"/><path d="M2,7.4 H23 V25.6 Q23,28.6 20,28.6 H5 Q2,28.6 2,25.6 Z" fill="#d91515"/><rect x="5.9" y="11" width="2.2" height="14" rx="1.1" fill="#fff"/><rect x="11.3" y="11" width="2.2" height="14" rx="1.1" fill="#fff"/><rect x="16.7" y="11" width="2.2" height="14" rx="1.1" fill="#fff"/></svg>
</div>
<div class="a" style="left:0;top:823.80px;width:2729px;height:2px;background:#efefef"></div>
<div class="a" style="left:0;top:825.80px;width:2729px;height:82.58px;background:#fff">
<div class="a" style="left:19px;top:21.7px;width:33px;height:33px;border:2.1px solid #a0a6a3;border-radius:6px;box-sizing:border-box;background:#fff"></div>
<div class="t" style="left:133.20px;top:25.47px;font-size:28.5px;line-height:28.5px;color:#1b8ef0;font-weight:400">newvalue.com.</div>
<div class="a" style="left:331.09px;top:12px;width:41.5px;height:35px;border:3.2px solid #a3a6a5;border-radius:12px;box-sizing:border-box;box-shadow:1px 1.5px 0 0.3px #a3a6a5"></div>
<div class="t" style="left:330.59px;width:42px;text-align:center;top:15.20px;font-size:24.5px;line-height:28px;color:#8a8a8a">1</div>
<div class="t" style="left:537.20px;top:25.47px;font-size:28.5px;line-height:28.5px;color:#000;font-weight:400">Authoritative</div>
<svg class="a" style="left:935.00px;top:19.00px" width="35" height="35" viewBox="0 0 35 35"><circle cx="17.5" cy="17.5" r="17.5" fill="#45bf69"/><path d="M6.6,18.2 L14.4,26 L28.2,12.2" fill="none" stroke="#fff" stroke-width="4.3"/></svg>
<div class="t" style="left:1081.20px;top:25.47px;font-size:28.5px;line-height:28.5px;color:#000;font-weight:400">86400</div>
<div class="t" style="left:1197.20px;top:25.47px;font-size:28.5px;line-height:28.5px;color:#e8302f;font-weight:700">No</div>
<div class="t" style="left:1324.20px;top:25.47px;font-size:28.5px;line-height:28.5px;color:#000;font-weight:400">2023101608</div>
<div class="t" style="left:1521.20px;top:25.47px;font-size:28.5px;line-height:28.5px;color:#000;font-weight:400">172.21.223.168</div>
<div class="t" style="left:2119.20px;top:25.47px;font-size:28.5px;line-height:28.5px;color:#000;font-weight:400">Jul 16 2024</div>
<div class="t" style="left:2317.20px;top:25.47px;font-size:28.5px;line-height:28.5px;color:#000;font-weight:400">Dec 02 2024</div>
<svg class="a" style="left:2536.70px;top:25.00px" width="27" height="27" viewBox="0 0 27 27"><circle cx="13.3" cy="13.3" r="12.1" fill="none" stroke="#eeaa2a" stroke-width="2.4"/><rect x="7.8" y="7.8" width="11" height="11" rx="1.2" fill="#eeaa2a"/></svg>
<svg class="a" style="left:2589.00px;top:24.00px" width="33" height="30" viewBox="0 0 33 30"><path d="M18.6,5.6 H4.4 Q1.7,5.6 1.7,8.3 V24.1 Q1.7,26.8 4.4,26.8 H20.1 Q22.8,26.8 22.8,24.1 V16.75" fill="none" stroke="#1ea1dc" stroke-width="3.4"/><path d="M8.9,22.7 L9.2,17 L21.7,5.2 L27,10.3 L14.8,22.7 Z" fill="#1ea1dc"/><path d="M23.6,3.3 L26.2,0.7 Q27,0 27.8,0.7 L31.3,4.2 Q32,5 31.3,5.8 L28.6,8.6 Z" fill="#1ea1dc"/></svg>
<svg class="a" style="left:2644.00px;top:24.00px" width="25" height="29" viewBox="0 0 25 29"><rect x="0" y="2" width="24.8" height="3.8" rx="1.9" fill="#d91515"/><path d="M7.7,2.6 Q8.5,0.2 10.5,0.2 H14 Q16,0.2 16.6,2.6 Z" fill="#d91515"/><path d="M2,7.4 H23 V25.6 Q23,28.6 20,28.6 H5 Q2,28.6 2,25.6 Z" fill="#d91515"/><rect x="5.9" y="11" width="2.2" height="14" rx="1.1" fill="#fff"/><rect x="11.3" y="11" width="2.2" height="14" rx="1.1" fill="#fff"/><rect x="16.7" y="11" width="2.2" height="14" rx="1.1" fill="#fff"/></svg>
</div>
<div class="a" style="left:0;top:906.38px;width:2729px;height:2px;background:#efefef"></div>
<div class="a" style="left:0;top:908.38px;width:2729px;height:82.58px;background:#fff">
<div class="a" style="left:19px;top:21.7px;width:33px;height:33px;border:2.1px solid #a0a6a3;border-radius:6px;box-sizing:border-box;background:#fff"></div>
<div class="t" style="left:133.20px;top:25.47px;font-size:28.5px;line-height:28.5px;color:#1b8ef0;font-weight:400">testdhcp6.com.</div>
<div class="a" style="left:334.27px;top:12px;width:41.5px;height:35px;border:3.2px solid #a3a6a5;border-radius:12px;box-sizing:border-box;box-shadow:1px 1.5px 0 0.3px #a3a6a5"></div>
<div class="t" style="left:333.77px;width:42px;text-align:center;top:15.20px;font-size:24.5px;line-height:28px;color:#8a8a8a">1</div>
<div class="t" style="left:537.20px;top:25.47px;font-size:28.5px;line-height:28.5px;color:#000;font-weight:400">Authoritative</div>
<svg class="a" style="left:935.00px;top:19.00px" width="35" height="35" viewBox="0 0 35 35"><circle cx="17.5" cy="17.5" r="17.5" fill="#45bf69"/><path d="M6.6,18.2 L14.4,26 L28.2,12.2" fill="none" stroke="#fff" stroke-width="4.3"/></svg>
<div class="t" style="left:1081.20px;top:25.47px;font-size:28.5px;line-height:28.5px;color:#000;font-weight:400">86400</div>
<div class="t" style="left:1197.20px;top:25.47px;font-size:28.5px;line-height:28.5px;color:#e8302f;font-weight:700">No</div>
<div class="t" style="left:1324.20px;top:25.47px;font-size:28.5px;line-height:28.5px;color:#000;font-weight:400">2023102424</div>
<div class="t" style="left:1521.20px;top:25.47px;font-size:28.5px;line-height:28.5px;color:#000;font-weight:400">172.21.223.168</div>
<div class="t" style="left:2119.20px;top:25.47px;font-size:28.5px;line-height:28.5px;color:#000;font-weight:400">Jul 16 2024</div>
<div class="t" style="left:2317.20px;top:25.47px;font-size:28.5px;line-height:28.5px;color:#000;font-weight:400">Dec 02 2024</div>
<svg class="a" style="left:2536.70px;top:25.00px" width="27" height="27" viewBox="0 0 27 27"><circle cx="13.3" cy="13.3" r="12.1" fill="none" stroke="#eeaa2a" stroke-width="2.4"/><rect x="7.8" y="7.8" width="11" height="11" rx="1.2" fill="#eeaa2a"/></svg>
<svg class="a" style="left:2589.00px;top:24.00px" width="33" height="30" viewBox="0 0 33 30"><path d="M18.6,5.6 H4.4 Q1.7,5.6 1.7,8.3 V24.1 Q1.7,26.8 4.4,26.8 H20.1 Q22.8,26.8 22.8,24.1 V16.75" fill="none" stroke="#1ea1dc" stroke-width="3.4"/><path d="M8.9,22.7 L9.2,17 L21.7,5.2 L27,10.3 L14.8,22.7 Z" fill="#1ea1dc"/><path d="M23.6,3.3 L26.2,0.7 Q27,0 27.8,0.7 L31.3,4.2 Q32,5 31.3,5.8 L28.6,8.6 Z" fill="#1ea1dc"/></svg>
<svg class="a" style="left:2644.00px;top:24.00px" width="25" height="29" viewBox="0 0 25 29"><rect x="0" y="2" width="24.8" height="3.8" rx="1.9" fill="#d91515"/><path d="M7.7,2.6 Q8.5,0.2 10.5,0.2 H14 Q16,0.2 16.6,2.6 Z" fill="#d91515"/><path d="M2,7.4 H23 V25.6 Q23,28.6 20,28.6 H5 Q2,28.6 2,25.6 Z" fill="#d91515"/><rect x="5.9" y="11" width="2.2" height="14" rx="1.1" fill="#fff"/><rect x="11.3" y="11" width="2.2" height="14" rx="1.1" fill="#fff"/><rect x="16.7" y="11" width="2.2" height="14" rx="1.1" fill="#fff"/></svg>
</div>
<div class="a" style="left:0;top:988.96px;width:2729px;height:2px;background:#efefef"></div>
</div>
<div class="t" style="left:2524.50px;top:1599.08px;font-size:28.6px;line-height:28.6px;color:#111;font-weight:400;">Showing 1 to 13 of 13 domains</div>
<div class="t" style="left:2380.50px;top:33.34px;font-size:30.3px;line-height:30.3px;color:#fff;font-weight:400;">win cluster</div>
<div class="a" style="left:2628.00px;top:20.00px;width:64.00px;height:56.00px;background:#0b74e8;border-radius:6px"></div>
<div class="a" style="left:2344.00px;top:102.00px;width:700.00px;height:126.00px;background:#13bb83;border-radius:6px;box-shadow:0 4px 10px rgba(0,0,0,0.18)"></div>
<div class="t" style="left:2395.00px;top:127.68px;font-size:24px;line-height:24px;color:#fff;font-weight:400;">SUCCESS</div>
<div class="t" style="left:2363.00px;top:171.70px;font-size:28.7px;line-height:28.7px;color:#fff;font-weight:400;">This zone are no longer managed by DDI Central.</div>
<div class="t" style="left:-161.30px;width:600px;text-align:center;top:171.08px;font-size:22.7px;line-height:22.7px;color:#fff;font-weight:400;">Domains</div>
<div class="t" style="left:-161.30px;width:600px;text-align:center;top:291.08px;font-size:22.7px;line-height:22.7px;color:#fff;font-weight:400;">Audit</div>
<div class="t" style="left:-161.30px;width:600px;text-align:center;top:399.38px;font-size:22.7px;line-height:22.7px;color:#fff;font-weight:400;">Analytics</div>
<div class="t" style="left:-161.30px;width:600px;text-align:center;top:527.38px;font-size:22.7px;line-height:22.7px;color:#fff;font-weight:400;">Config</div>
<div class="t" style="left:-161.30px;width:600px;text-align:center;top:661.38px;font-size:22.7px;line-height:22.7px;color:#fff;font-weight:400;">Scavenging</div>
<div class="t" style="left:-161.30px;width:600px;text-align:center;top:778.38px;font-size:22.7px;line-height:22.7px;color:#fff;font-weight:400;">Schedule</div>
<svg class="a" style="left:0.00px;top:36.00px;" width="62.00" height="58.00" viewBox="0 36 62 58"><g fill="none" stroke-linecap="round"><path d="M5,59 Q18,45 33,54" stroke="#555" stroke-width="4.5" opacity="0.7"/><path d="M13,47 Q30,38 42,57" stroke="#555" stroke-width="4.5" opacity="0.7"/><path d="M32,41 Q49,46 48,72" stroke="#556" stroke-width="4.5" opacity="0.7"/><path d="M48,47 Q64,66 37,90" stroke="#555" stroke-width="5.5" opacity="0.7"/><path d="M8,57 Q19,47 32,54" stroke="#e8151b" stroke-width="2.6"/><path d="M15,46 Q30,40 41,57" stroke="#2db33a" stroke-width="2.6"/><path d="M33,42 Q48,47 48,70" stroke="#1a83f1" stroke-width="2.6"/><path d="M49,49 Q62,67 41,87" stroke="#f4b22a" stroke-width="3.6"/></g></svg>
<svg class="a" style="left:11.00px;top:185.00px;" width="40.00" height="35.00" viewBox="0 0 40 35"><path d="M6.5,34.5 Q4.5,34.5 3.2,31.5 A20,20 0 1 1 36.8,31.5 Q35.5,34.5 33.5,34.5 Z" fill="#fff"/><path d="M7.6,30.6 A15.6,15.6 0 1 1 32.4,30.6" fill="none" stroke="#2d3450" stroke-width="1.9"/><g stroke="#2d3450" stroke-width="2.1" stroke-linecap="round"><line x1="20" y1="4.8" x2="20" y2="8.6"/><line x1="9.6" y1="9.4" x2="11.9" y2="11.7"/><line x1="30.4" y1="9.4" x2="28.1" y2="11.7"/><line x1="5" y1="20" x2="8.6" y2="20"/><line x1="35" y1="20" x2="31.4" y2="20"/><line x1="12.5" y1="29.5" x2="27.5" y2="29.3"/><line x1="20.5" y1="20" x2="25.4" y2="14.8"/></g><circle cx="20.5" cy="20.3" r="2.3" fill="#2d3450"/></svg>
<div class="a" style="left:1.00px;top:289.00px;width:60.00px;height:67.00px;background:#474e6a;border-radius:9px"></div>
<svg class="a" style="left:10.90px;top:301.50px" width="46.90" height="41.00" viewBox="0 0 46.90 41.00"><defs><clipPath id="g1a"><path d="M-9,-9 H55.9 V21.899999999999977 H15.5 V50.0 H-9 Z"/></clipPath><clipPath id="g1b"><circle cx="20.0" cy="20.0" r="17"/></clipPath></defs><g clip-path="url(#g1a)"><g clip-path="url(#g1b)" fill="none" stroke="#fff"><circle cx="20.0" cy="20.0" r="15.4" stroke-width="3.2"/><ellipse cx="20.0" cy="20.0" rx="6.0" ry="15.4" stroke-width="3.04"/><line x1="0.0" y1="13.100000000000023" x2="40.0" y2="13.100000000000023" stroke-width="3.3600000000000003"/><line x1="0.0" y1="20.19999999999999" x2="40.0" y2="20.19999999999999" stroke-width="3.3600000000000003"/><line x1="0.0" y1="27.30000000000001" x2="40.0" y2="27.30000000000001" stroke-width="2.8800000000000003"/><line x1="14.0" y1="20.0" x2="14.0" y2="38.0" stroke-width="3.04"/></g></g><text x="18.90" y="36.40" font-family="Liberation Sans" font-weight="700" font-size="16.48" fill="#fff" stroke="#fff" stroke-width="0.50" textLength="24.0" lengthAdjust="spacingAndGlyphs">DNS</text></svg>
<svg class="a" style="left:13.00px;top:423.00px;" width="37.00" height="36.00" viewBox="0 0 37 36"><g fill="none" stroke="#fff" stroke-width="2.6"><rect x="2.1" y="1.8" width="17.6" height="31.6"/><rect x="26.6" y="4.6" width="8" height="8.2"/><rect x="26.6" y="23" width="8" height="8.2"/><path d="M19.7,17.5 L26.6,9 M19.7,17.5 L26.6,26.5"/></g><rect x="6" y="7.2" width="9" height="2.6" fill="#fff"/><rect x="6" y="12" width="9" height="2.6" fill="#fff"/><rect x="9.3" y="24" width="2.2" height="2.2" fill="#fff"/></svg>
<svg class="a" style="left:8.00px;top:540.00px;" width="48.00" height="48.00" viewBox="8 540 48 48"><path d="M31.1,545.2 A18.7,18.7 0 0 0 17,575.7 L31.1,562.4 Z" fill="#fff"/><path d="M33,563.8 H50.3 A18.7,18.7 0 0 1 19.1,578 Z" fill="#fff"/><rect x="33.9" y="554.5" width="3.5" height="6.4" fill="#fff"/><rect x="40" y="545.6" width="3.6" height="15.3" fill="#fff"/><rect x="45.9" y="549.9" width="3.8" height="11" fill="#fff"/></svg>
<svg class="a" style="left:14.50px;top:669.40px;" width="44.00" height="35.00" viewBox="0 0 44 35"><rect x="0.4" y="0.3" width="27.8" height="7.2" rx="1.6" fill="#fff"/><rect x="0.4" y="10" width="22" height="7.2" rx="1.6" fill="#fff"/><rect x="0.4" y="19.6" width="21" height="7.2" rx="1.6" fill="#fff"/><g fill="#2d3450"><rect x="3.2" y="3" width="1.6" height="1.6"/><rect x="6" y="3" width="1.6" height="1.6"/><rect x="15.4" y="3" width="9" height="1.6"/><rect x="3.2" y="12.8" width="1.6" height="1.6"/><rect x="6" y="12.8" width="1.6" height="1.6"/><rect x="3.2" y="22.4" width="1.6" height="1.6"/><rect x="6" y="22.4" width="1.6" height="1.6"/><rect x="15.4" y="22.4" width="4" height="1.6"/></g><rect x="12.2" y="26.8" width="1.8" height="3.6" fill="#fff"/><rect x="4.6" y="29.5" width="18" height="1.8" rx="0.9" fill="#fff"/><path d="M28.6,6.2 Q33,9.6 42.2,10 Q42.6,28 28.6,33.8 Q14.6,28 15,10 Q24.2,9.6 28.6,6.2 Z" fill="#fff" stroke="#2d3450" stroke-width="1.4"/><path d="M27.3,13.3 H29.9 L29.4,24.6 H27.8 Z" fill="#2d3450"/><circle cx="28.6" cy="27.6" r="1.4" fill="#2d3450"/></svg>
<svg class="a" style="left:14.50px;top:792.30px;" width="44.00" height="35.00" viewBox="0 0 44 35"><rect x="0.4" y="0.3" width="27.8" height="7.2" rx="1.6" fill="#fff"/><rect x="0.4" y="10" width="22" height="7.2" rx="1.6" fill="#fff"/><rect x="0.4" y="19.6" width="21" height="7.2" rx="1.6" fill="#fff"/><g fill="#2d3450"><rect x="3.2" y="3" width="1.6" height="1.6"/><rect x="6" y="3" width="1.6" height="1.6"/><rect x="15.4" y="3" width="9" height="1.6"/><rect x="3.2" y="12.8" width="1.6" height="1.6"/><rect x="6" y="12.8" width="1.6" height="1.6"/><rect x="3.2" y="22.4" width="1.6" height="1.6"/><rect x="6" y="22.4" width="1.6" height="1.6"/><rect x="15.4" y="22.4" width="4" height="1.6"/></g><rect x="12.2" y="26.8" width="1.8" height="3.6" fill="#fff"/><rect x="4.6" y="29.5" width="18" height="1.8" rx="0.9" fill="#fff"/><path d="M28.6,6.2 Q33,9.6 42.2,10 Q42.6,28 28.6,33.8 Q14.6,28 15,10 Q24.2,9.6 28.6,6.2 Z" fill="#fff" stroke="#2d3450" stroke-width="1.4"/><path d="M27.3,13.3 H29.9 L29.4,24.6 H27.8 Z" fill="#2d3450"/><circle cx="28.6" cy="27.6" r="1.4" fill="#2d3450"/></svg>
<svg class="a" style="left:16.50px;top:912.00px;" width="29.00" height="34.00" viewBox="0 0 29 34"><path d="M14.5,0.8 Q16,0.8 16,2.6 Q24.2,4.4 24.4,13.5 Q24.4,22.2 28.6,25.4 Q28.8,27.2 27.4,27.6 H1.6 Q0.2,27.2 0.4,25.4 Q4.6,22.2 4.6,13.5 Q4.8,4.4 13,2.6 Q13,0.8 14.5,0.8 Z" fill="#fff"/><path d="M10.4,29.2 H18.6 Q18.2,33 14.5,33 Q10.8,33 10.4,29.2 Z" fill="#fff"/></svg>
<svg class="a" style="left:0.00px;top:1025.00px;" width="65.00" height="45.00" viewBox="0 1025 65 45"><path d="M36,1032.3 H46.6 V1055 H36 Q28.7,1055 28.7,1047.6 V1039.7 Q28.7,1032.3 36,1032.3 Z" fill="#fff"/><rect x="46" y="1037" width="9.7" height="4.5" rx="1.3" fill="#fff"/><rect x="46" y="1045.5" width="9.7" height="4.5" rx="1.3" fill="#fff"/><path d="M29,1043.8 H22.4 Q15.6,1043.8 15.6,1051.6 Q15.6,1061.3 25.4,1061.3 H53.6" fill="none" stroke="#fff" stroke-width="3.4" stroke-linecap="round"/></svg>
<svg class="a" style="left:7.00px;top:1147.00px;" width="48.00" height="49.00" viewBox="0 0 48 49"><path d="M41.98,20.70 L47.42,21.67 L47.42,27.53 L41.98,28.50 L39.53,34.41 L42.69,38.94 L38.54,43.09 L34.01,39.93 L28.10,42.38 L27.13,47.82 L21.27,47.82 L20.30,42.38 L14.39,39.93 L9.86,43.09 L5.71,38.94 L8.87,34.41 L6.42,28.50 L0.98,27.53 L0.98,21.67 L6.42,20.70 L8.87,14.79 L5.71,10.26 L9.86,6.11 L14.39,9.27 L20.30,6.82 L21.27,1.38 L27.13,1.38 L28.10,6.82 L34.01,9.27 L38.54,6.11 L42.69,10.26 L39.53,14.79 Z" fill="#e1e3e2"/><path d="M30.8,12.6 Q35.5,11 37.5,15.5 L33.3,18.2 L34.2,20.8 L37.4,21.2 Q37,27 30.5,27.2 L18.6,38.4 Q15.6,40.8 13.2,38.2 Q11,35.6 13.6,33 L25,21.4 Q24.6,14.8 30.8,12.6 Z" fill="none" stroke="#2d3450" stroke-width="2.2" stroke-linejoin="round"/></svg>
<svg class="a" style="left:18.00px;top:1609.00px;" width="27.00" height="24.00" viewBox="0 0 27 24"><path d="M11.5,2 L3,11.6 L11.5,21.2 M23.5,2 L15,11.6 L23.5,21.2" fill="none" stroke="#fff" stroke-width="4.2" stroke-linejoin="miter" stroke-linecap="butt"/></svg>
<svg class="a" style="left:117.60px;top:120.60px" width="48.20" height="41.00" viewBox="0 0 48.20 41.00"><defs><clipPath id="g2a"><path d="M-9,-9 H57.20000000000002 V21.900000000000006 H15.5 V50.0 H-9 Z"/></clipPath><clipPath id="g2b"><circle cx="20.0" cy="20.0" r="17"/></clipPath></defs><g clip-path="url(#g2a)"><g clip-path="url(#g2b)" fill="none" stroke="#fff"><circle cx="20.0" cy="20.0" r="15.4" stroke-width="3.2"/><ellipse cx="20.0" cy="20.0" rx="6.0" ry="15.4" stroke-width="3.04"/><line x1="0.0" y1="13.099999999999994" x2="40.0" y2="13.099999999999994" stroke-width="3.3600000000000003"/><line x1="0.0" y1="20.19999999999999" x2="40.0" y2="20.19999999999999" stroke-width="3.3600000000000003"/><line x1="0.0" y1="27.30000000000001" x2="40.0" y2="27.30000000000001" stroke-width="2.8800000000000003"/><line x1="14.0" y1="20.0" x2="14.0" y2="38.0" stroke-width="3.04"/></g></g><text x="18.80" y="36.40" font-family="Liberation Sans" font-weight="700" font-size="16.62" fill="#fff" stroke="#fff" stroke-width="0.50" textLength="25.4" lengthAdjust="spacingAndGlyphs">COM</text></svg>
<svg class="a" style="left:115.50px;top:237.50px;" width="47.00" height="47.00" viewBox="0 0 47 47"><rect x="0.3" y="0.5" width="40.6" height="36.8" rx="2" fill="#fff"/><rect x="0.3" y="7.2" width="40.6" height="1.4" fill="#4a506b" opacity="0.8"/><g fill="#4a506b"><rect x="6.4" y="12.6" width="2.4" height="1.8"/><rect x="11.8" y="12.6" width="21.4" height="1.8"/><rect x="6.4" y="17.4" width="2.4" height="1.8"/><rect x="11.8" y="17.4" width="21.4" height="1.8"/><rect x="6.4" y="22.2" width="2.4" height="1.8"/><rect x="11.8" y="22.2" width="21.4" height="1.8"/><rect x="6.4" y="27" width="2.4" height="1.8"/><rect x="11.8" y="27" width="16" height="1.8"/></g><circle cx="38.2" cy="37.8" r="8.2" fill="#4a506b"/><circle cx="38.2" cy="37.8" r="7.2" fill="none" stroke="#fff" stroke-width="2"/><path d="M34.8,34.2 L38.4,38.4" stroke="#fff" stroke-width="2.2" stroke-linecap="round"/></svg>
<svg class="a" style="left:120.50px;top:361.50px;" width="36.00" height="28.00" viewBox="0 0 36 28"><path d="M3.3,2.8 V24.45 H33.3" fill="none" stroke="#fff" stroke-width="4.2" stroke-linejoin="round" stroke-linecap="round"/><rect x="9.6" y="11.3" width="4.3" height="6.2" fill="#fff"/><rect x="16.3" y="3.7" width="4.2" height="13.8" fill="#fff"/><rect x="22.5" y="7.2" width="4.3" height="10.3" fill="#fff"/><rect x="29.1" y="0.8" width="4.4" height="16.7" fill="#fff"/></svg>
<svg class="a" style="left:105.00px;top:470.00px;" width="60.00" height="50.00" viewBox="105 470 60 50"><path d="M142.54,492.02 L146.20,492.77 L146.20,497.63 L142.54,498.38 L139.92,502.91 L141.11,506.45 L136.89,508.88 L134.41,506.09 L129.19,506.09 L126.71,508.88 L122.49,506.45 L123.68,502.91 L121.06,498.38 L117.40,497.63 L117.40,492.77 L121.06,492.02 L123.68,487.49 L122.49,483.95 L126.71,481.52 L129.19,484.31 L134.41,484.31 L136.89,481.52 L141.11,483.95 L139.92,487.49 Z" fill="#fff"/><circle cx="131.8" cy="495.2" r="4.8" fill="#4a506b"/><path d="M158.17,483.81 L160.29,484.13 L160.29,486.67 L158.17,486.99 L156.86,489.25 L157.64,491.26 L155.45,492.52 L154.11,490.85 L151.49,490.85 L150.15,492.52 L147.96,491.26 L148.74,489.25 L147.43,486.99 L145.31,486.67 L145.31,484.13 L147.43,483.81 L148.74,481.55 L147.96,479.54 L150.15,478.28 L151.49,479.95 L154.11,479.95 L155.45,478.28 L157.64,479.54 L156.86,481.55 Z" fill="#fff"/><circle cx="152.8" cy="485.4" r="2.5" fill="#4a506b"/><path d="M158.17,503.61 L160.29,503.93 L160.29,506.47 L158.17,506.79 L156.86,509.05 L157.64,511.06 L155.45,512.32 L154.11,510.65 L151.49,510.65 L150.15,512.32 L147.96,511.06 L148.74,509.05 L147.43,506.79 L145.31,506.47 L145.31,503.93 L147.43,503.61 L148.74,501.35 L147.96,499.34 L150.15,498.08 L151.49,499.75 L154.11,499.75 L155.45,498.08 L157.64,499.34 L156.86,501.35 Z" fill="#fff"/><circle cx="152.8" cy="505.2" r="2.5" fill="#4a506b"/></svg>
<svg class="a" style="left:115.00px;top:595.00px;" width="55.00" height="60.00" viewBox="115 595 55 60"><path d="M140,639.5 H126.8 Q124.5,639.5 124.5,637.2 V606.8 Q124.5,604.5 126.8,604.5 H150.8 Q153,604.5 153,606.8 V625" fill="none" stroke="#fff" stroke-width="3"/><rect x="129" y="610.6" width="17.5" height="2.5" fill="#fff"/><rect x="129" y="616.4" width="17.5" height="2.5" fill="#fff"/><rect x="129" y="622.2" width="14" height="2.5" fill="#fff"/><rect x="129" y="628" width="8" height="2.5" fill="#fff"/><circle cx="149.3" cy="634.6" r="9.6" fill="#4a506b"/><circle cx="149.3" cy="634.6" r="6.6" fill="none" stroke="#fff" stroke-width="3"/><path d="M145.6,633.6 Q146.6,631 149.4,631" fill="none" stroke="#fff" stroke-width="1.6" stroke-linecap="round"/><path d="M154.2,639.6 L160,645.8" stroke="#fff" stroke-width="3.6" stroke-linecap="round"/></svg>
<svg class="a" style="left:123.00px;top:725.50px;" width="32.00" height="36.00" viewBox="0 0 32 36"><rect x="2.1" y="5.6" width="27.7" height="28.3" rx="3.2" fill="none" stroke="#fff" stroke-width="3.2"/><rect x="2" y="5.6" width="28" height="7.2" fill="#fff"/><rect x="6.8" y="0.5" width="3.4" height="7" rx="1.2" fill="#fff"/><rect x="21.6" y="0.5" width="3.4" height="7" rx="1.2" fill="#fff"/><g fill="#fff"><rect x="7.5" y="16.5" width="4" height="3.6"/><rect x="14" y="16.5" width="4" height="3.6"/><rect x="20.5" y="16.5" width="4" height="3.6"/><rect x="7.5" y="23.5" width="4" height="3.6"/><rect x="14" y="23.5" width="4" height="3.6"/><rect x="20.5" y="23.5" width="4" height="3.6"/></g></svg>
<svg class="a" style="left:2537.00px;top:33.00px;" width="28.00" height="28.00" viewBox="0 0 28 28"><path d="M0.6,4 L11,2.4 V13.2 H0.6 Z" fill="#1ba1dc"/><path d="M12.6,2.2 L27.2,0.6 V13.2 H12.6 Z" fill="#5aaeee"/><path d="M0.6,14.8 H11 V25.4 L0.6,24 Z" fill="#0e74e4"/><path d="M12.6,14.8 H27.2 V27.4 L12.6,25.6 Z" fill="#1ba1dc"/></svg>
<svg class="a" style="left:2649.00px;top:37.00px;" width="22.00" height="22.00" viewBox="0 0 22 22"><path d="M11,1 V21 M1,11 H21" stroke="#fff" stroke-width="1.8"/></svg>
<svg class="a" style="left:2824.00px;top:27.00px;" width="44.00" height="44.00" viewBox="0 0 44 44"><path d="M6.85,31.5 V19 A15.1,15.1 0 0 1 37.05,19 V31.5" fill="none" stroke="#fff" stroke-width="6.3"/><rect x="0.8" y="30.6" width="42.2" height="6.7" rx="3.3" fill="#fff"/><path d="M15.6,37 H28.3 Q28,43.2 21.95,43.2 Q15.9,43.2 15.6,37 Z" fill="#fff"/></svg>
<svg class="a" style="left:2930.00px;top:20.50px;" width="55.00" height="55.00" viewBox="0 0 55 55"><circle cx="27.5" cy="27.5" r="27.4" fill="#fff"/><circle cx="27.5" cy="20.4" r="9.6" fill="#2d3450"/><path d="M12,44.6 C15.5,37 21.5,33.6 27.5,35 C33.5,33.6 39.5,37 43.6,44.6 C39,47.2 33.5,48.3 27.5,48.3 C21.5,48.3 16,47.2 12,44.6 Z" fill="#2d3450"/></svg>
<svg class="a" style="left:2364.00px;top:127.00px;" width="24.00" height="24.00" viewBox="0 0 24 24"><circle cx="11.8" cy="11.8" r="11.6" fill="#fff"/><path d="M5.6,12.2 L10,16.4 L18,8.4" fill="none" stroke="#13bb83" stroke-width="3"/></svg>
<svg class="a" style="left:2979.00px;top:129.50px;" width="15.00" height="14.00" viewBox="0 0 15 14"><path d="M2,1.5 L13,12.5 M13,1.5 L2,12.5" stroke="#fff" stroke-width="2.8"/></svg>
<svg class="a" style="left:2336.40px;top:262.20px" width="43.20" height="36.40" viewBox="0 0 43.20 36.40"><defs><clipPath id="g3a"><path d="M-9,-9 H52.19999999999982 V19.23176470588237 H13.735294117646845 V45.400000000000034 H-9 Z"/></clipPath><clipPath id="g3b"><circle cx="17.59999999999991" cy="17.600000000000023" r="14.6"/></clipPath></defs><g clip-path="url(#g3a)"><g clip-path="url(#g3b)" fill="none" stroke="#fff"><circle cx="17.59999999999991" cy="17.600000000000023" r="13.225882352941175" stroke-width="2.748235294117647"/><ellipse cx="17.59999999999991" cy="17.600000000000023" rx="5.152941176470588" ry="13.225882352941175" stroke-width="2.6108235294117645"/><line x1="0.42352941176477543" y1="11.674117647058836" x2="34.77647058823504" y2="11.674117647058836" stroke-width="2.8856470588235292"/><line x1="0.42352941176477543" y1="17.77176470588239" x2="34.77647058823504" y2="17.77176470588239" stroke-width="2.8856470588235292"/><line x1="0.42352941176477543" y1="23.869411764705887" x2="34.77647058823504" y2="23.869411764705887" stroke-width="2.473411764705882"/><line x1="12.44705882352946" y1="17.600000000000023" x2="12.44705882352946" y2="33.05882352941177" stroke-width="2.6108235294117645"/></g></g><text x="16.80" y="32.40" font-family="Liberation Sans" font-weight="700" font-size="13.97" fill="#fff" stroke="#fff" stroke-width="0.43" textLength="22.4" lengthAdjust="spacingAndGlyphs">COM</text></svg>
<svg class="a" style="left:2377.00px;top:268.00px;" width="10.00" height="10.00" viewBox="0 0 10 10"><path d="M5,0 V10 M0,5 H10" stroke="#fff" stroke-width="1.9"/></svg>
<svg class="a" style="left:2717.00px;top:263.00px;" width="29.00" height="29.00" viewBox="0 0 29 29"><rect x="10.2" y="0.2" width="8.6" height="12" rx="1" fill="#fff"/><path d="M4.6,11.6 H24.4 L14.5,21.6 Z" fill="#fff"/><path d="M0.2,20.6 Q0.2,19.2 1.6,19.2 H9.4 L14.5,24.2 L19.6,19.2 H27.4 Q28.8,19.2 28.8,20.6 V27.2 Q28.8,28.6 27.4,28.6 H1.6 Q0.2,28.6 0.2,27.2 Z" fill="#fff"/><circle cx="21.2" cy="24.6" r="1.1" fill="#33ab3a"/><circle cx="24.6" cy="24.6" r="1.1" fill="#33ab3a"/></svg>
<svg class="a" style="left:2913.00px;top:266.00px;" width="26.00" height="26.00" viewBox="0 0 26 26"><rect x="1.7" y="1.6" width="21.2" height="21.2" rx="2" fill="none" stroke="#33ab3a" stroke-width="2.6"/><path d="M6.8,9.6 H17.8 L12.3,15.8 Z" fill="#33ab3a"/></svg>
<svg class="a" style="left:836.00px;top:408.50px;" width="15.00" height="11.00" viewBox="0 0 15 11"><path d="M0,0.5 H15 L7.5,10.5 Z" fill="#777"/></svg>
<svg class="a" style="left:1770.00px;top:406.00px;" width="30.00" height="30.00" viewBox="0 0 30 30"><circle cx="12" cy="12" r="8.6" fill="none" stroke="#fff" stroke-width="3.8"/><path d="M18.2,18.2 L25.6,25.6" stroke="#fff" stroke-width="4.6" stroke-linecap="round"/></svg>
<svg class="a" style="left:2016.00px;top:395.00px;" width="42.00" height="44.00" viewBox="0 0 42 44"><path d="M1,12.5 H27 L17.2,24.5 V38 L11,42.5 V24.5 Z" fill="#fff" stroke="#fff" stroke-width="1.4" stroke-linejoin="round"/><path d="M30.5,3.5 L37.5,11.5 M37.5,3.5 L30.5,11.5" stroke="#fff" stroke-width="2.2"/></svg>
</body></html>
